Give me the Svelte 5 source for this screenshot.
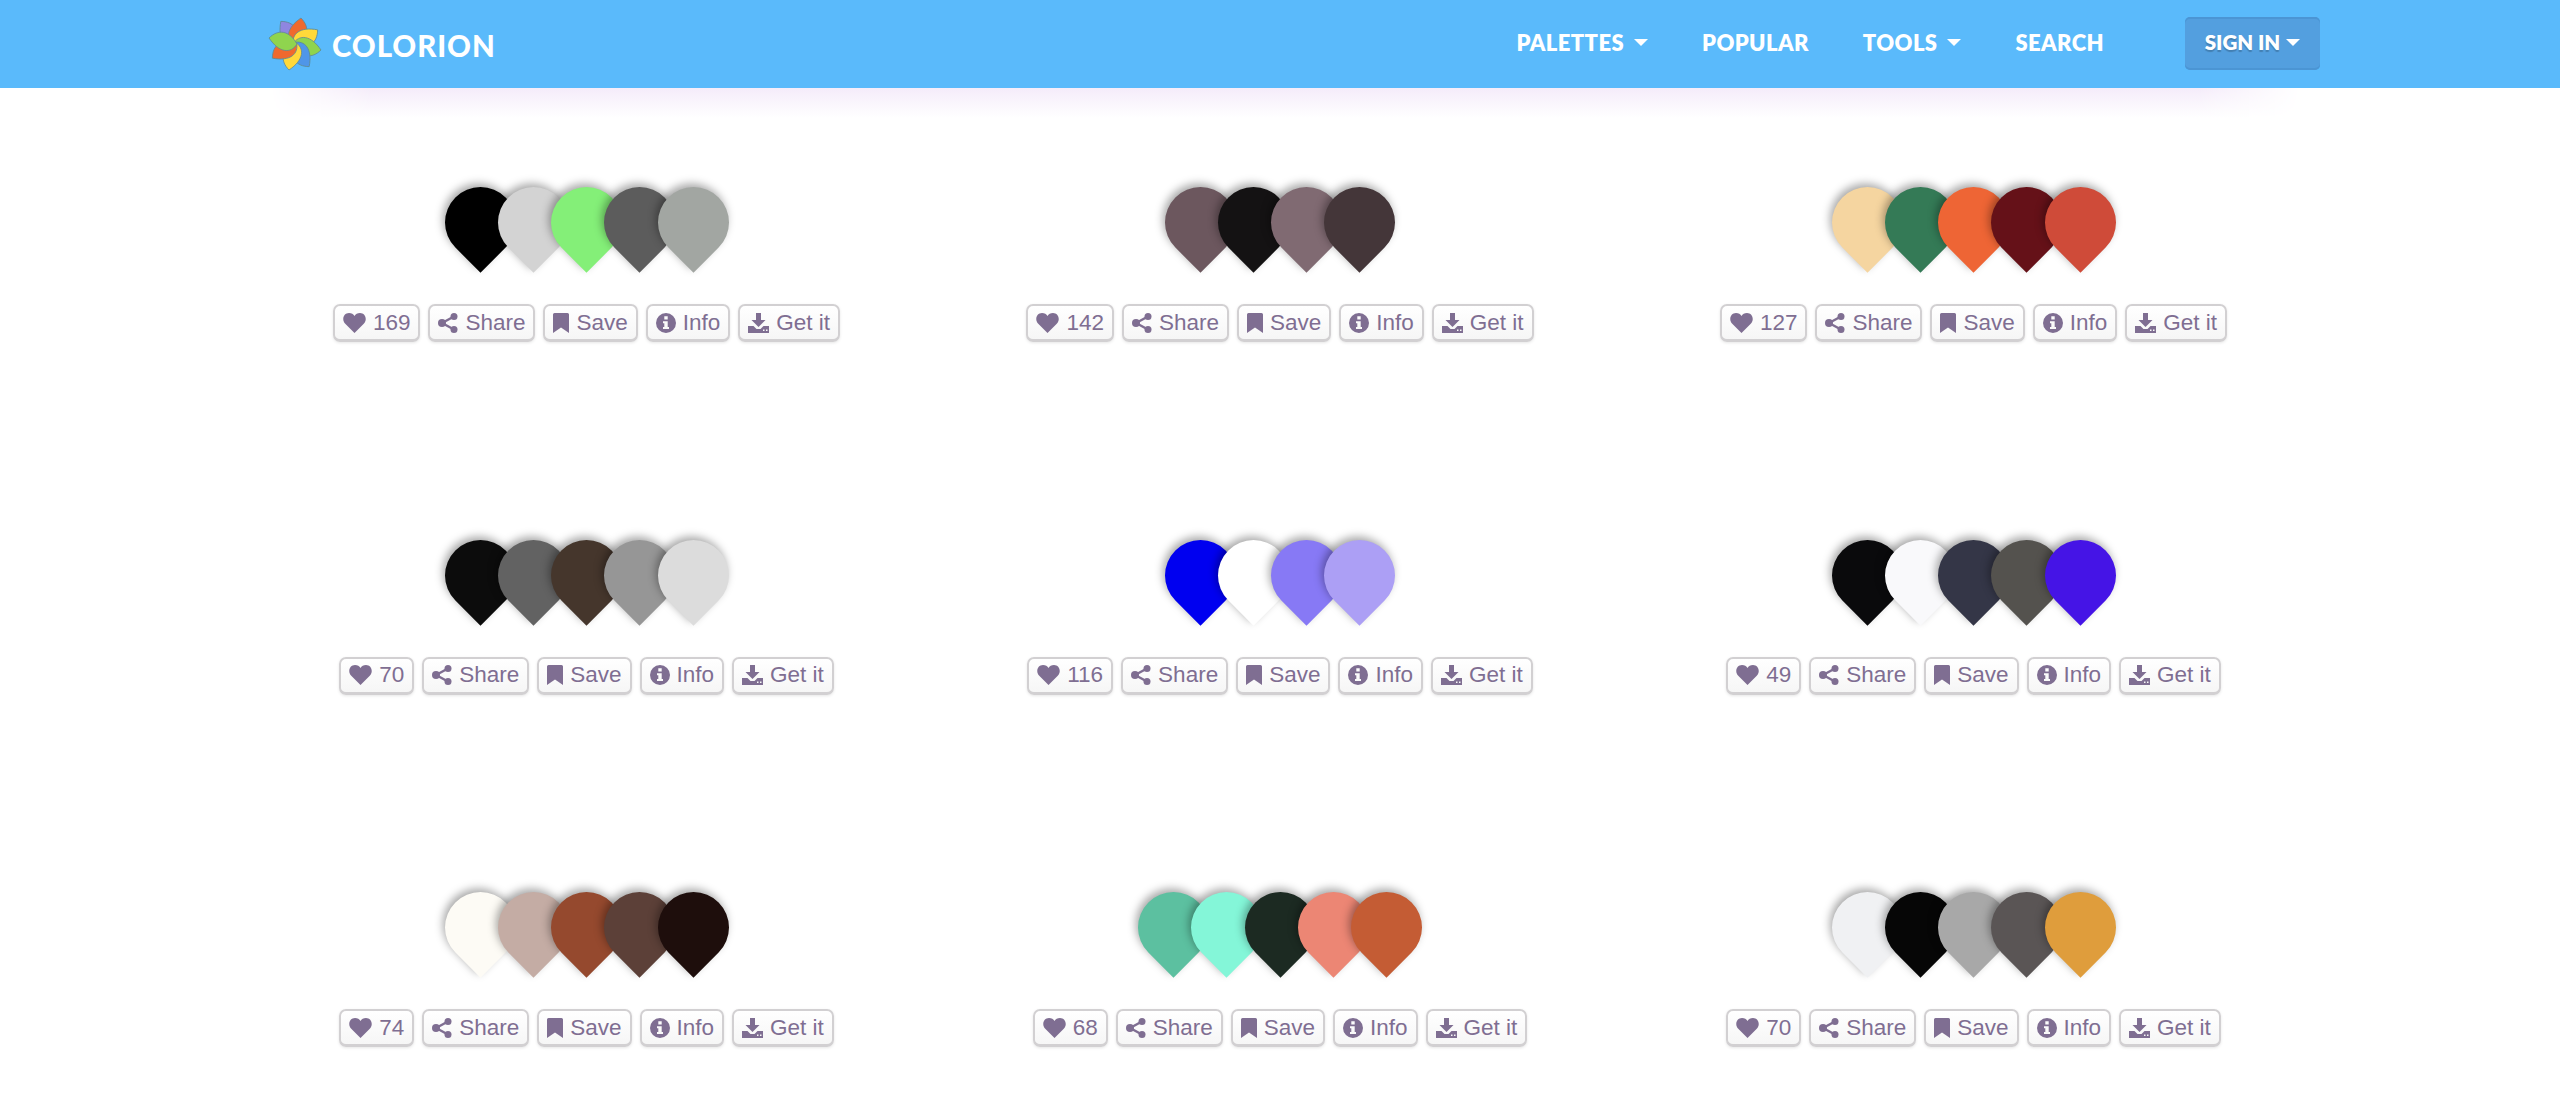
<script>
  const rows = [
    [
      { likes: 169, colors: ['#000000', '#d3d3d3', '#84ef78', '#5c5c5c', '#a2a6a2'] },
      { likes: 142, colors: ['#6c575e', '#141213', '#806a72', '#443639'] },
      { likes: 127, colors: ['#f5d5a0', '#347a56', '#ee6535', '#651118', '#cf4b39'] }
    ],
    [
      { likes: 70, colors: ['#0c0c0c', '#626262', '#45362c', '#969696', '#dcdcdc'] },
      { likes: 116, colors: ['#0000f0', '#ffffff', '#8779f5', '#ac9ff5'] },
      { likes: 49, colors: ['#0a0a0c', '#f9f9fb', '#343647', '#54524e', '#4514e6'] }
    ],
    [
      { likes: 74, colors: ['#fdfbf5', '#c4aca4', '#95492e', '#5c4038', '#1e0e0c'] },
      { likes: 68, colors: ['#5cc0a0', '#84f6d8', '#1c2a22', '#ec8674', '#c45c34'] },
      { likes: 70, colors: ['#f0f1f3', '#060606', '#a8a8a8', '#5a5555', '#df9d3c'] }
    ]
  ];
  const petals = [
    ['#8f86e0', 315], ['#f0692e', 0], ['#ffd93a', 45], ['#8fd44e', 90],
    ['#4f96e8', 135], ['#ffd93a', 180], ['#f0692e', 225], ['#8fd44e', 270]
  ];
</script>

<nav class="nav">
  <div class="brand">
    <svg class="logo" viewBox="-27 -27 54 54" aria-hidden="true">
      {#each petals as [fill, angle]}
        <path d="M0 2C-10-4-9-16 6-26C15-17 14-6 0 2Z" {fill} stroke="#5f8a94" stroke-width=".8" transform="rotate({angle})" />
      {/each}
    </svg>
    <span class="word">COLORION</span>
  </div>
  <div class="links">
    <span class="link">PALETTES<i class="caret"></i></span>
    <span class="link">POPULAR</span>
    <span class="link">TOOLS<i class="caret"></i></span>
    <span class="link last">SEARCH</span>
    <span class="signin">SIGN IN<i class="caret"></i></span>
  </div>
</nav>
<div class="glow"></div>

<main class="grid">
  {#each rows as row}
    {#each row as p}
      <section class="card">
        <div class="pins">
          {#each p.colors as c}
            <span class="pin" style="background:{c}"></span>
          {/each}
        </div>
        <div class="btns">
          <span class="btn">
            <svg class="i-heart" viewBox="0 0 23 20"><path d="M11.500 20 2 10.500C-1.500 6.500.5 0 6 0c2.500 0 4.500 1.300 5.500 3 1-1.700 3-3 5.500-3 5.500 0 7.500 6.500 4 10.500Z"/></svg>
            {p.likes}
          </span>
          <span class="btn">
            <svg class="i-share" viewBox="0 0 20 20"><circle cx="16" cy="3.500" r="3.500"/><circle cx="16" cy="16.500" r="3.500"/><circle cx="4" cy="10" r="4"/><path class="line" d="M4 10 16 3.500M4 10l12 6.500"/></svg>
            Share
          </span>
          <span class="btn">
            <svg class="i-save" viewBox="0 0 16 20"><path d="M1.500 0h13A1.500 1.500 0 0 1 16 1.500V20l-8-5.500L0 20V1.500A1.500 1.500 0 0 1 1.500 0Z"/></svg>
            Save
          </span>
          <span class="btn">
            <svg class="i-info" viewBox="0 0 20 20"><path fill-rule="evenodd" d="M10 0a10 10 0 1 1 0 20 10 10 0 0 1 0-20ZM8.300 3.300v3.200h3.400V3.300ZM7 8.200v2.100h1.300v3.600H7V16h6v-2.100h-1.300V8.200Z"/></svg>
            Info
          </span>
          <span class="btn">
            <svg class="i-get" viewBox="0 0 21 20"><path fill-rule="evenodd" d="M8 0h5v7h4.500l-7 7-7-7H8ZM0 13h5.500l3 3h4l3-3H21v7H0Zm15 3.500V18h1.500v-1.500Zm3 0V18h1.500v-1.500Z"/></svg>
            Get it
          </span>
        </div>
      </section>
    {/each}
  {/each}
</main>

<style>
  :global(body) {
    margin: 0;
    background: #fff;
    font-family: "Liberation Sans", Arial, sans-serif;
  }
  .nav {
    height: 88px;
    background: #5abafb;
    display: flex;
    justify-content: space-between;
    align-items: center;
    padding: 0 240px 0 268px;
    position: relative;
    z-index: 1;
  }
  .brand {
    display: flex;
    align-items: center;
    gap: 10px;
  }
  .logo {
    width: 54px;
    height: 54px;
  }
  .word {
    color: #fff;
    font: 900 29.500px Lato, sans-serif;
    letter-spacing: 0.9px;
    padding-top: 2px;
  }
  .links {
    display: flex;
    align-items: center;
    color: #fff;
    font: 800 22px Lato, sans-serif;
  }
  .link {
    display: flex;
    align-items: center;
    margin-right: 54px;
    white-space: nowrap;
    position: relative;
    top: -2px;
    letter-spacing: 0.4px;
  }
  .link.last {
    margin-right: 81px;
  }
  .caret {
    flex: none;
    width: 0;
    height: 0;
    margin-left: 10px;
    border-left: 7px solid transparent;
    border-right: 7px solid transparent;
    border-top: 7px solid #fff;
  }
  .signin {
    box-sizing: border-box;
    width: 135px;
    height: 53px;
    margin-top: -2px;
    padding-bottom: 2px;
    display: flex;
    align-items: center;
    justify-content: center;
    background: #539fdf;
    border-radius: 5px;
    font-size: 20.500px;
    box-shadow: inset 0 -2px 0 #4b95d4, inset 0 2px 0 #4b95d4;
    text-shadow: 0 2px 1px rgba(0, 0, 0, .2);
    white-space: nowrap;
  }
  .signin .caret {
    margin-left: 6px;
  }
  .glow {
    height: 30px;
    margin: 0 260px -30px 270px;
    background: linear-gradient(#f5ecfa, #fff);
    mask-image: linear-gradient(90deg, transparent, #000 5%, #000 95%, transparent);
  }
  .grid {
    display: grid;
    grid-template-columns: repeat(3, 693.500px);
    justify-content: center;
    row-gap: 197.500px;
    padding: 99px 0 55px;
  }
  .card {
    display: flex;
    flex-direction: column;
    align-items: center;
  }
  .pins {
    display: flex;
    height: 86px;
  }
  .pin {
    flex: none;
    width: 71px;
    height: 71px;
    margin-left: -17.750px;
    border-radius: 50% 50% 50% 0;
    transform: rotate(-45deg);
    box-shadow: 1px -4px 9px rgba(0, 0, 0, .34);
  }
  .pin:first-child {
    margin-left: 0;
  }
  .btns {
    display: flex;
    gap: 8px;
    margin-top: 31px;
  }
  .btn {
    box-sizing: border-box;
    height: 38px;
    padding: 0 8px;
    display: flex;
    align-items: center;
    gap: 7px;
    background: linear-gradient(#fff, #f6f6f6);
    border: 2px solid #d2d0d2;
    border-bottom-width: 3px;
    border-radius: 7px;
    color: #7f6e92;
    font-size: 22.500px;
    white-space: nowrap;
    box-shadow: 0 1px 3px rgba(0, 0, 0, .1);
  }
  .btn svg {
    height: 20px;
    fill: #7f6e92;
    flex: none;
  }
  .i-heart { width: 23px; }
  .i-share { width: 20px; }
  .i-save { width: 16px; }
  .i-info { width: 20px; }
  .i-get { width: 21px; }
  .line {
    fill: none;
    stroke: #7f6e92;
    stroke-width: 2.500;
  }
</style>
